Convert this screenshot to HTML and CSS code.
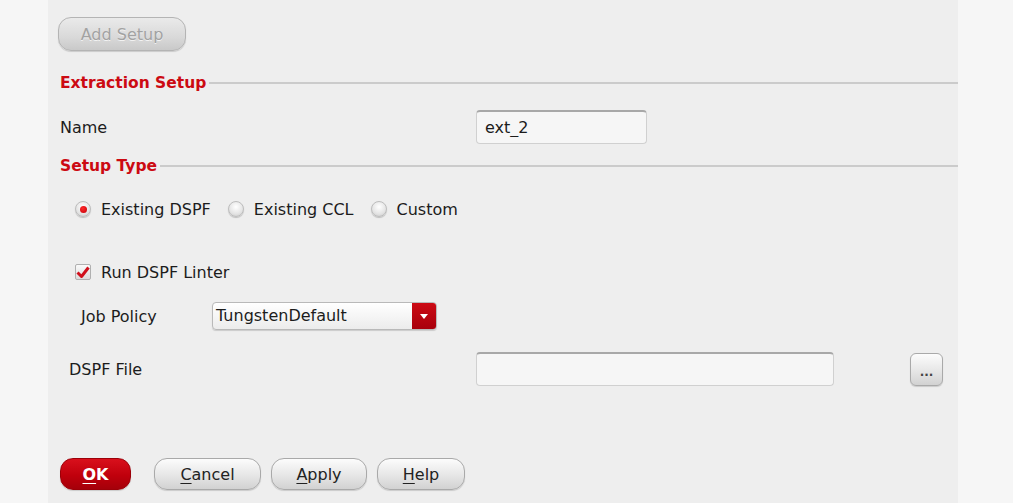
FILE: index.html
```html
<!DOCTYPE html>
<html lang="en">
<head>
  <meta charset="UTF-8" />
  <title>Extraction Setup</title>
  <link rel="stylesheet" href="styles.css">
</head>
<body>

<div class="dialog">
  <button class="btn add-btn" disabled>Add Setup</button>

  <div class="section-title">Extraction Setup</div>

  <div class="row name-row">
    <span class="label">Name</span>
    <input class="field name-field" type="text" value="ext_2">
  </div>

  <div class="section-title type-title">Setup Type</div>

  <div class="radio-row">
    <label class="option"><span class="radio checked"></span>Existing DSPF</label>
    <label class="option"><span class="radio"></span>Existing CCL</label>
    <label class="option"><span class="radio"></span>Custom</label>
  </div>

  <div class="check-row">
    <span class="checkbox">
      <svg width="14" height="13" viewBox="0 0 14 13"><path d="M1.5 6.5 L5.5 10.5 L12.5 1.5" fill="none" stroke="#d0101c" stroke-width="3" stroke-linejoin="round"/></svg>
    </span>
    Run DSPF Linter
  </div>

  <div class="row job-row">
    <span class="label job-label">Job Policy</span>
    <div class="select">
      <span class="select-text">TungstenDefault</span>
      <span class="select-arrow"></span>
    </div>
  </div>

  <div class="row file-row">
    <span class="label file-label">DSPF File</span>
    <input class="field file-field" type="text" value="">
    <button class="btn dots-btn">...</button>
  </div>

  <div class="actions">
    <button class="btn ok-btn"><u>O</u>K</button>
    <button class="btn cancel-btn"><u>C</u>ancel</button>
    <button class="btn apply-btn"><u>A</u>pply</button>
    <button class="btn help-btn"><u>H</u>elp</button>
  </div>
</div>

</body>
</html>
```

FILE: styles.css
```css
body {
  margin: 0;
  background: #f6f6f6;
  font-family: 'DejaVu Sans', sans-serif;
  font-size: 16px;
  color: #1c1c1c;
}

.dialog {
  margin-left: 48px;
  width: 898px;
  height: 486px;
  padding: 17px 0 0 12px;
  background: #eeeeee;
  box-sizing: content-box;
}

.btn {
  font-family: 'DejaVu Sans', sans-serif;
  font-size: 16px;
  color: #222;
  background: linear-gradient(to bottom, #fcfcfc, #e6e6e6 55%, #d2d2d2);
  border: 1px solid #a9a9a9;
  border-radius: 13px;
  box-shadow: 0 1px 1px rgba(0, 0, 0, 0.15);
  padding: 0;
  cursor: pointer;
}

.btn u {
  text-underline-offset: 3px;
}

.add-btn {
  display: block;
  margin-left: -2px;
  width: 128px;
  height: 34px;
  color: #a2a2a2;
  background: linear-gradient(to bottom, #eaeaea, #d9d9d9 60%, #c9c9c9);
  border-color: #b4b4b4;
  text-shadow: 0 1px 0 #f2f2f2;
  cursor: default;
}

.section-title {
  display: flex;
  align-items: center;
  margin-top: 22px;
  height: 20px;
  color: #cc0a12;
  font-weight: bold;
  font-size: 15.5px;
}

.section-title::after {
  content: "";
  flex: 1;
  height: 2px;
  margin-left: 3px;
  background: #cbcbcb;
}

.type-title {
  margin-top: 12px;
}

.row {
  display: flex;
  align-items: center;
}

.label {
  width: 416px;
}

.name-row {
  margin-top: 17px;
  height: 34px;
}

.field {
  box-sizing: border-box;
  height: 34px;
  padding: 0 8px;
  font-family: 'DejaVu Sans', sans-serif;
  font-size: 16px;
  color: #1c1c1c;
  background: #f6f6f6;
  border: 1px solid #d0d0d0;
  border-top: 2px solid #a8a8a8;
  border-radius: 4px;
  outline: none;
}

.name-field {
  width: 171px;
}

.radio-row {
  display: flex;
  align-items: center;
  gap: 17px;
  margin-top: 23px;
  height: 20px;
  padding-left: 15px;
}

.option {
  display: flex;
  align-items: center;
  gap: 10px;
}

.radio {
  position: relative;
  width: 14px;
  height: 14px;
  border-radius: 50%;
  border: 1px solid #bdbdbd;
  background: radial-gradient(circle at 50% 35%, #ffffff, #e4e4e4 60%, #c6c6c6);
  box-shadow: 0 1px 1px rgba(0, 0, 0, 0.2);
}

.radio.checked::after {
  content: "";
  position: absolute;
  left: 3.5px;
  top: 3.5px;
  width: 7px;
  height: 7px;
  border-radius: 50%;
  background: radial-gradient(circle at 40% 35%, #ff2a2a, #c4000a);
}

.check-row {
  display: flex;
  align-items: center;
  gap: 10px;
  margin-top: 43px;
  height: 20px;
  padding-left: 15px;
}

.checkbox {
  display: flex;
  align-items: center;
  justify-content: center;
  width: 14px;
  height: 14px;
  border: 1px solid #b0b0b0;
  border-radius: 2px;
  background: linear-gradient(to bottom, #fafafa, #dcdcdc);
}

.job-row {
  margin-top: 20px;
  height: 28px;
  padding-left: 21px;
}

.job-label {
  width: 131px;
}

.select {
  display: flex;
  width: 225px;
  height: 28px;
  box-sizing: border-box;
  border: 1px solid #b9b9b9;
  border-radius: 4px;
  overflow: hidden;
  background: linear-gradient(to bottom, #ffffff, #ececec);
  box-shadow: 0 1px 1px rgba(0, 0, 0, 0.15);
}

.select-text {
  flex: 1;
  padding-left: 3px;
  line-height: 26px;
}

.select-arrow {
  position: relative;
  width: 24px;
  background: linear-gradient(to bottom, #cc0a14, #a8000c);
}

.select-arrow::after {
  content: "";
  position: absolute;
  left: 8px;
  top: 11px;
  border-left: 4px solid transparent;
  border-right: 4px solid transparent;
  border-top: 5px solid #ffffff;
}

.file-row {
  margin-top: 22px;
  height: 34px;
  padding-left: 9px;
}

.file-label {
  width: 407px;
}

.file-field {
  width: 358px;
}

.dots-btn {
  margin-left: 76px;
  width: 33px;
  height: 33px;
  border-radius: 6px;
  font-size: 12px;
  font-weight: bold;
  color: #444;
  padding-top: 6px;
}

.actions {
  display: flex;
  margin-top: 72px;
  height: 32px;
}

.actions .btn {
  height: 32px;
  margin-right: 10px;
}

.ok-btn {
  width: 71px;
  margin-right: 23px !important;
  color: #ffffff;
  font-weight: bold;
  background: linear-gradient(to bottom, #d9101c, #c0000c 55%, #a5000a);
  border-color: #9c0008;
}

.cancel-btn {
  width: 107px;
}

.apply-btn {
  width: 96px;
}

.help-btn {
  width: 88px;
}
```
